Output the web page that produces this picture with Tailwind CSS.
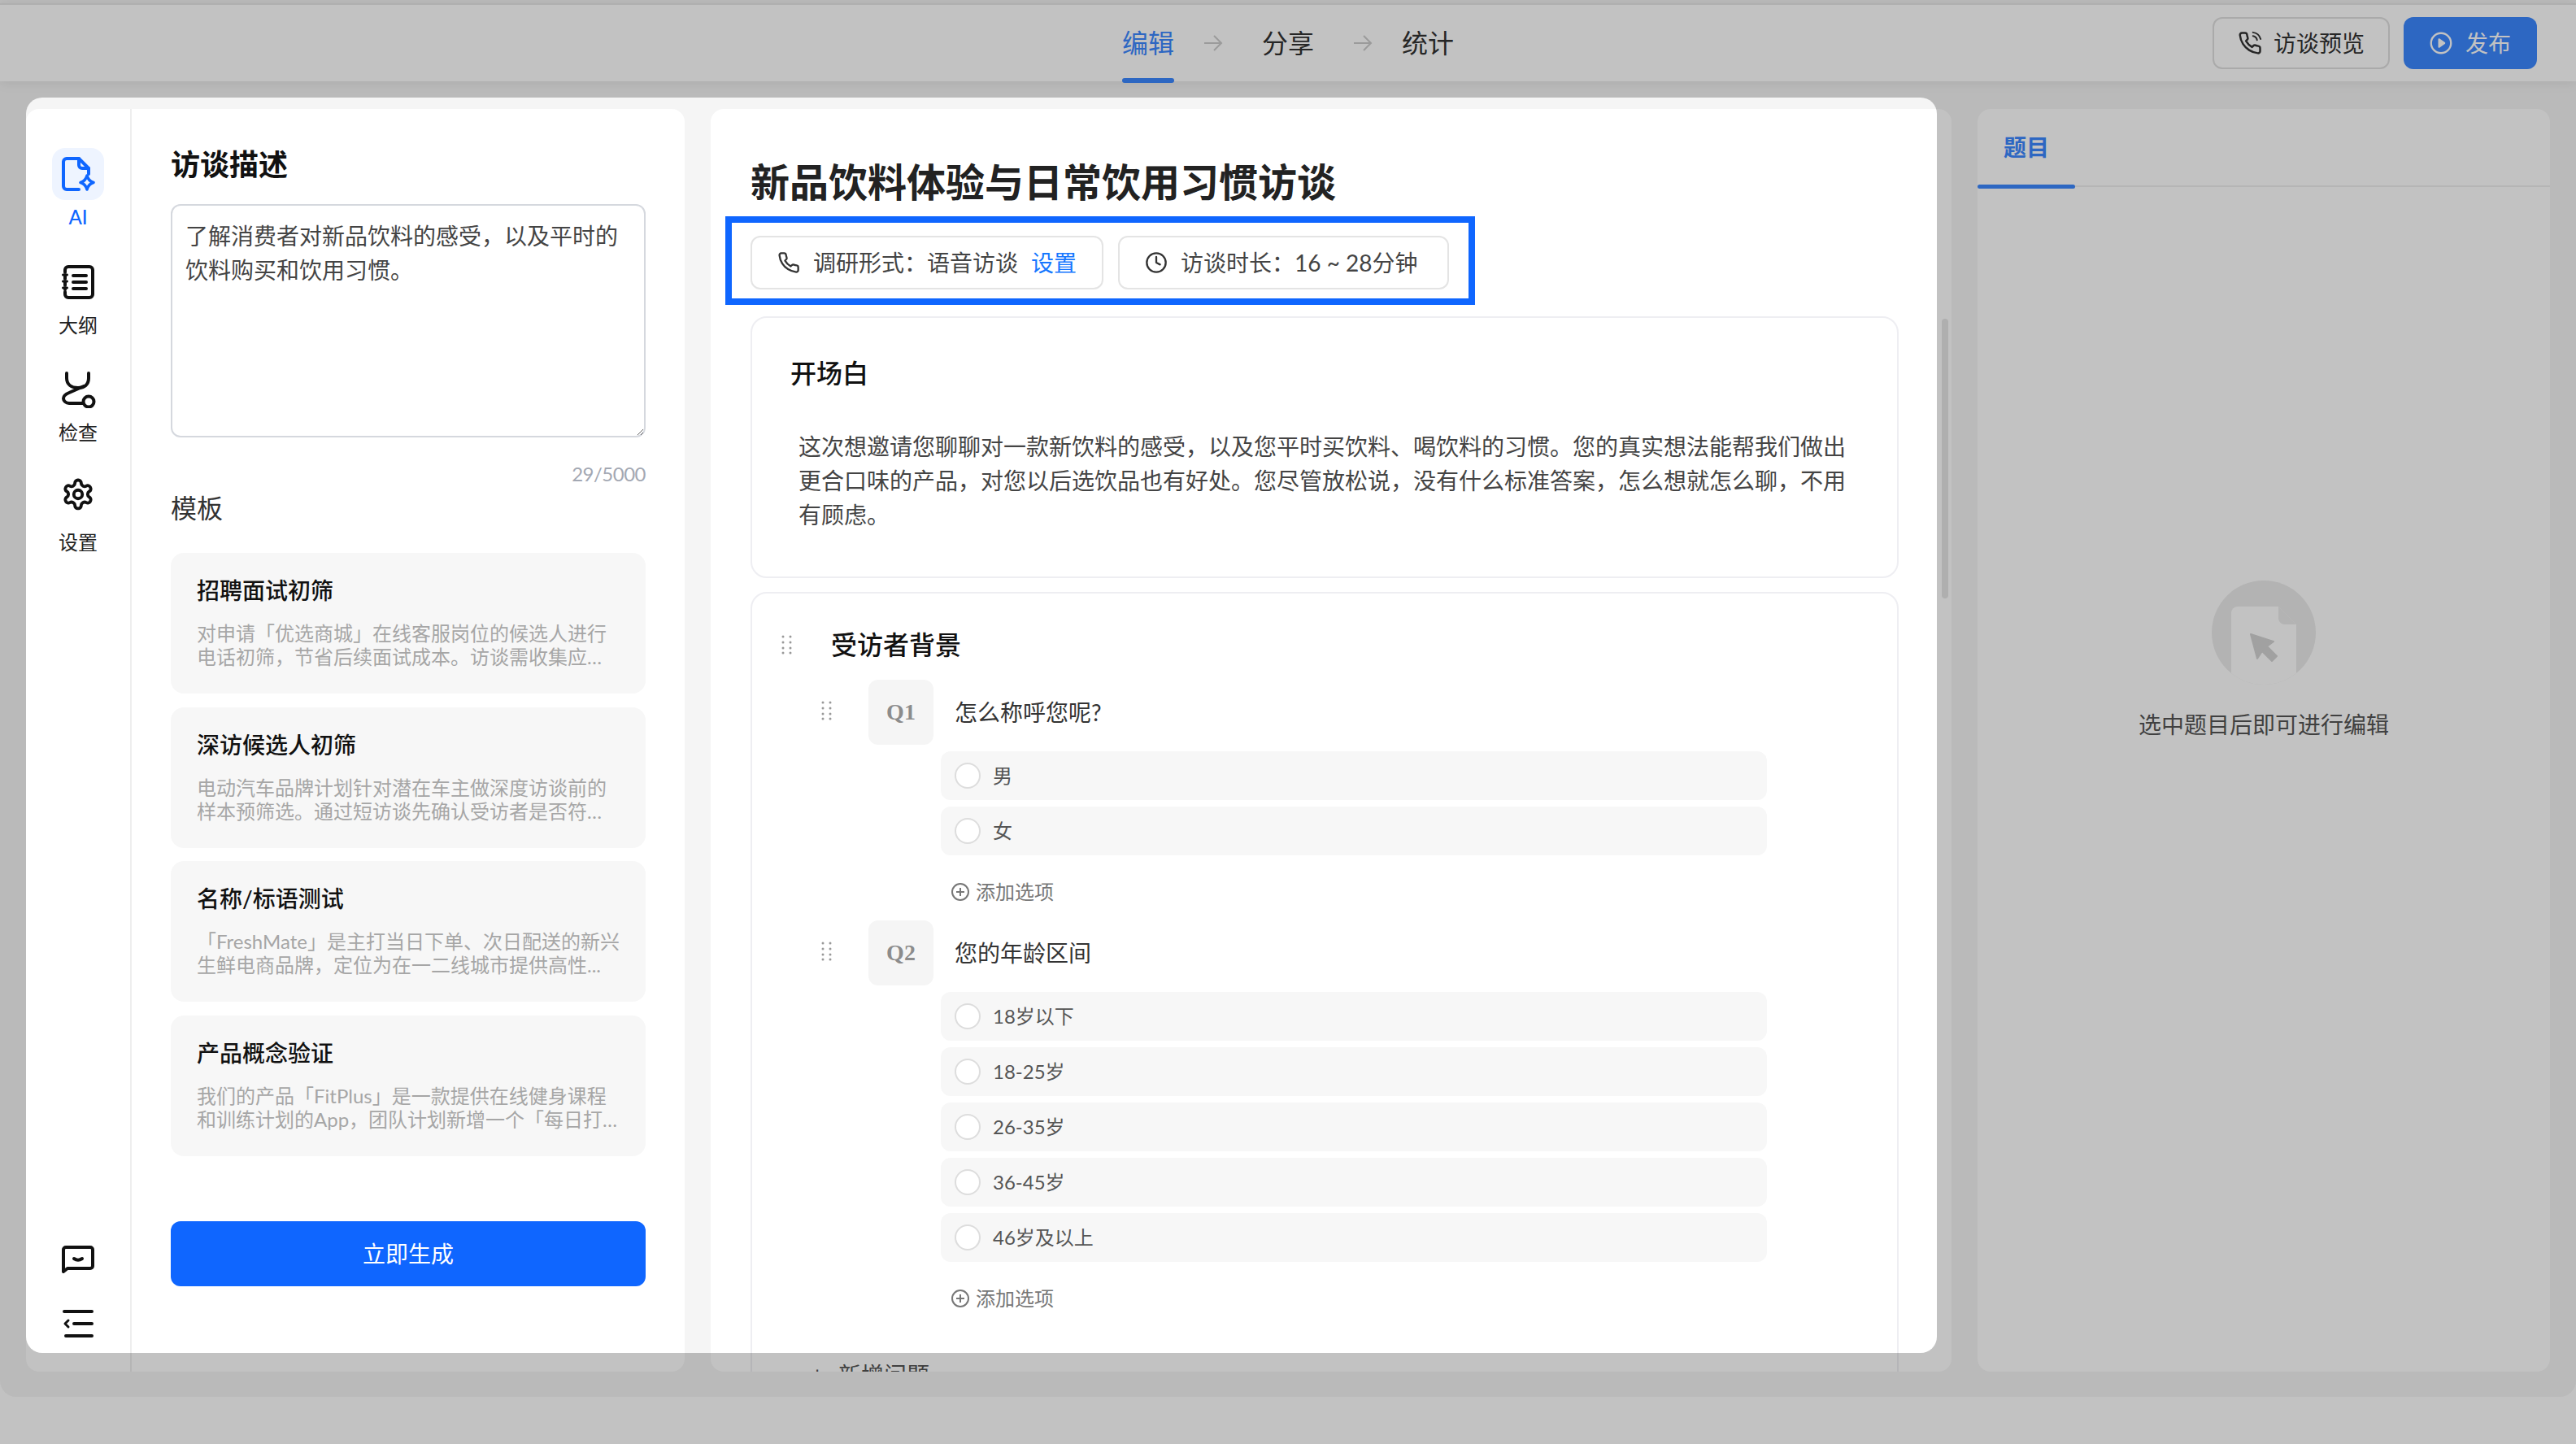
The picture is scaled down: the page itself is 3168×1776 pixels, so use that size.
<!DOCTYPE html>
<html lang="zh">
<head>
  <meta charset="UTF-8">
  <title>访谈编辑</title>
  <script src="https://cdn.jsdelivr.net/npm/@tailwindcss/browser@4"></script>
</head>
<body class="relative w-[3168px] h-[1776px] overflow-hidden bg-white text-[#333] [font-family:'Lato','Noto_Sans_CJK_SC',sans-serif]">
  <div class="h-[1718px] bg-[#f5f5f5] rounded-b-[20px] pt-[4px] overflow-hidden">

    <!-- Top bar -->
    <header class="relative h-[96px] bg-white border-t-2 border-[#e6e6e6] shadow-[0_2px_14px_rgba(0,0,0,0.08)] grid grid-cols-[1fr_auto_1fr] items-center">
      <div></div>
      <nav class="flex items-center h-full text-[32px] leading-[44px]">
        <div class="relative h-full flex items-center text-[#3c88ff]">
          编辑
          <span class="absolute left-0 right-0 bottom-[-2px] h-[6px] rounded-full bg-[#3c88ff]"></span>
        </div>
        <svg class="w-[24px] h-[24px] ml-[36px] mr-[48px] text-[#ccc]" viewBox="0 0 24 24" fill="none" stroke="currentColor" stroke-width="2"><path d="M1 12h21M13 3l9 9-9 9"/></svg>
        <div>分享</div>
        <svg class="w-[24px] h-[24px] ml-[48px] mr-[36px] text-[#ccc]" viewBox="0 0 24 24" fill="none" stroke="currentColor" stroke-width="2"><path d="M1 12h21M13 3l9 9-9 9"/></svg>
        <div>统计</div>
      </nav>
      <div class="flex justify-end gap-[17px] pr-[48px]">
        <button class="h-[64px] w-[218px] flex items-center justify-center gap-[14px] rounded-[12px] border-2 border-[#e0e0e0] bg-white text-[28px]">
          <svg class="w-[30px] h-[30px]" viewBox="0 0 24 24" fill="none" stroke="currentColor" stroke-width="2" stroke-linecap="round" stroke-linejoin="round"><path d="M22 16.900v3a2 2 0 0 1-2.200 2 19.800 19.800 0 0 1-8.600-3 19.500 19.500 0 0 1-6-6 19.800 19.800 0 0 1-3-8.700A2 2 0 0 1 4.100 2h3a2 2 0 0 1 2 1.700 12.800 12.800 0 0 0 .7 2.800 2 2 0 0 1-.4 2.100L8.100 9.900a16 16 0 0 0 6 6l1.300-1.300a2 2 0 0 1 2.100-.4 12.800 12.800 0 0 0 2.800.7 2 2 0 0 1 1.700 2z"/><path d="M15 5a5 5 0 0 1 4 4M15 1.500a9 9 0 0 1 7.500 6.500" stroke-width="1.600"/></svg>
          访谈预览
        </button>
        <button class="h-[64px] w-[164px] flex items-center justify-center gap-[16px] rounded-[12px] bg-[#3c88ff] text-white text-[28px]">
          <svg class="w-[28px] h-[28px]" viewBox="0 0 24 24" fill="none" stroke="currentColor" stroke-width="2"><circle cx="12" cy="12" r="10.500"/><path d="M10 8l5.500 4-5.500 4z" fill="currentColor" stroke-linejoin="round"/></svg>
          发布
        </button>
      </div>
    </header>

    <main class="flex gap-[32px] px-[32px] pt-[34px]">

      <!-- Left panel: rail and form -->
      <section class="flex w-[810px] h-[1553px] bg-white rounded-[16px] overflow-hidden">
        <aside class="w-[130px] h-full border-r-2 border-[#eeeeee] flex flex-col justify-between items-center pt-[48px] pb-[42px] text-[24px] leading-[32px] text-[#222]">
          <div class="flex flex-col items-center gap-[31.500px]">
            <div class="flex flex-col items-center gap-[5px] text-[#0f66ff]">
              <div class="w-[64px] h-[64px] rounded-[16px] bg-[#eef4ff] flex items-center justify-center">
                <svg class="w-[42px] h-[44px]" viewBox="0 0 42 44" fill="none" stroke="#0f66ff" stroke-width="4" stroke-linecap="round" stroke-linejoin="round"><path d="M22 41H7a4 4 0 0 1-4-4V7a4 4 0 0 1 4-4h15l12 12v7"/><path d="M22 3v8a4 4 0 0 0 4 4h8"/><path d="M32 24q2 7 8 8.500q-6 1.500-8 8.500q-2-7-8-8.500q6-1.500 8-8.500z" stroke-width="3.500"/></svg>
              </div>
              <span class="font-medium">AI</span>
            </div>
            <div class="flex flex-col items-center gap-[5px]">
              <div class="w-[64px] h-[64px] flex items-center justify-center">
                <svg class="w-[40px] h-[42px]" viewBox="0 0 40 42" fill="none" stroke="#111" stroke-width="4" stroke-linecap="round" stroke-linejoin="round"><path d="M4 9V6a4 4 0 0 1 4-4h26a4 4 0 0 1 4 4v30a4 4 0 0 1-4 4H8a4 4 0 0 1-4-4v-3"/><path d="M4 13v4M4 21v4M4 29v1"/><path d="M1.500 12h5M1.500 20h5M1.500 28h5" stroke-width="3"/><path d="M14 13h16M14 21h16M14 29h16"/></svg>
              </div>
              <span>大纲</span>
            </div>
            <div class="flex flex-col items-center gap-[5px]">
              <div class="w-[64px] h-[64px] flex items-center justify-center">
                <svg class="w-[44px] h-[46px]" viewBox="0 0 44 46" fill="none" stroke="#111" stroke-width="4" stroke-linecap="round" stroke-linejoin="round"><path d="M8 3v6c0 8 6 12 14 12s13-4 13-12V3" /><path d="M29 19L11 27c-5 2-7 4-7 7s3 6 7 6h17"/><circle cx="35" cy="38" r="6.500"/></svg>
              </div>
              <span>检查</span>
            </div>
            <div class="flex flex-col items-center gap-[7px]">
              <div class="w-[64px] h-[64px] flex items-center justify-center">
                <svg class="w-[42px] h-[42px] mb-[8px]" viewBox="0 0 24 24" fill="none" stroke="#111" stroke-width="2.200" stroke-linecap="round" stroke-linejoin="round"><path d="M12.200 2h-.4a2 2 0 0 0-2 2v.2a2 2 0 0 1-1 1.700l-.4.300a2 2 0 0 1-2 0l-.2-.1a2 2 0 0 0-2.700.7l-.2.400a2 2 0 0 0 .7 2.700l.2.100a2 2 0 0 1 1 1.700v.5a2 2 0 0 1-1 1.700l-.2.100a2 2 0 0 0-.7 2.700l.2.400a2 2 0 0 0 2.700.7l.2-.1a2 2 0 0 1 2 0l.4.300a2 2 0 0 1 1 1.700v.2a2 2 0 0 0 2 2h.4a2 2 0 0 0 2-2v-.2a2 2 0 0 1 1-1.700l.4-.3a2 2 0 0 1 2 0l.2.100a2 2 0 0 0 2.700-.7l.2-.4a2 2 0 0 0-.7-2.700l-.2-.1a2 2 0 0 1-1-1.700v-.5a2 2 0 0 1 1-1.700l.2-.1a2 2 0 0 0 .7-2.700l-.2-.4a2 2 0 0 0-2.700-.7l-.2.100a2 2 0 0 1-2 0l-.4-.3a2 2 0 0 1-1-1.700V4a2 2 0 0 0-2-2z"/><circle cx="12" cy="12" r="3"/></svg>
              </div>
              <span>设置</span>
            </div>
          </div>
          <div class="flex flex-col items-center gap-[44px]">
            <svg class="w-[42px] h-[36px]" viewBox="0 0 42 36" fill="none" stroke="#111" stroke-width="4" stroke-linecap="round" stroke-linejoin="round"><path d="M3 33V6a3 3 0 0 1 3-3h30a3 3 0 0 1 3 3v20a3 3 0 0 1-3 3H8z"/><path d="M16 17q5 3.500 10 0" /></svg>
            <svg class="w-[38px] h-[34px]" viewBox="0 0 38 34" fill="none" stroke="#111" stroke-width="4" stroke-linecap="round" stroke-linejoin="round"><path d="M2 2h34M14 17h22M4 32h32"/><path d="M7 13l-4 4 4 4" stroke-width="3"/></svg>
          </div>
        </aside>

        <div class="flex-1 px-[48px] pt-[48px] flex flex-col">
          <h2 class="text-[36px] leading-[40px] font-bold text-[#111]">访谈描述</h2>
          <textarea class="mt-[29px] w-[584px] h-[287px] shrink-0 border-2 border-[#d5d8de] rounded-[12px] px-[16px] py-[16px] text-[28px] leading-[42px] text-[#444] outline-none resize-y">了解消费者对新品饮料的感受，以及平时的饮料购买和饮用习惯。</textarea>
          <div class="mt-[29px] text-right text-[24px] leading-[32px] tracking-[-0.5px] text-[#a3a8b3]">29/5000</div>
          <h3 class="mt-[4px] text-[32px] leading-[44px] text-[#333]">模板</h3>
          <div class="mt-[33px] flex flex-col gap-[16.500px]">
            <div class="h-[173px] rounded-[16px] bg-[#f7f7f7] px-[32px] pt-[26px]">
              <div class="text-[28px] leading-[40px] font-medium text-[#111]">招聘面试初筛</div>
              <p class="mt-[18px] text-[24px] leading-[29px] text-[#a6a6a6] line-clamp-2">对申请「优选商城」在线客服岗位的候选人进行电话初筛，节省后续面试成本。访谈需收集应聘者的相关信息</p>
            </div>
            <div class="h-[173px] rounded-[16px] bg-[#f7f7f7] px-[32px] pt-[26px]">
              <div class="text-[28px] leading-[40px] font-medium text-[#111]">深访候选人初筛</div>
              <p class="mt-[18px] text-[24px] leading-[29px] text-[#a6a6a6] line-clamp-2">电动汽车品牌计划针对潜在车主做深度访谈前的样本预筛选。通过短访谈先确认受访者是否符合条件与意愿</p>
            </div>
            <div class="h-[173px] rounded-[16px] bg-[#f7f7f7] pl-[32px] pr-[28px] pt-[26px]">
              <div class="text-[28px] leading-[40px] font-medium text-[#111]">名称/标语测试</div>
              <p class="mt-[18px] text-[24px] leading-[29px] text-[#a6a6a6]">「FreshMate」是主打当日下单、次日配送的新兴生鲜电商品牌，定位为在一二线城市提供高性...</p>
            </div>
            <div class="h-[173px] rounded-[16px] bg-[#f7f7f7] px-[32px] pt-[26px]">
              <div class="text-[28px] leading-[40px] font-medium text-[#111]">产品概念验证</div>
              <p class="mt-[18px] text-[24px] leading-[29px] text-[#a6a6a6] line-clamp-2">我们的产品「FitPlus」是一款提供在线健身课程和训练计划的App，团队计划新增一个「每日打卡挑战」功能</p>
            </div>
          </div>
          <button class="mt-[80px] h-[80px] w-full shrink-0 rounded-[12px] bg-[#0f66ff] text-white text-[28px]">立即生成</button>
        </div>
      </section>

      <!-- Middle panel: outline -->
      <section class="relative w-[1526px] h-[1553px] bg-white rounded-[16px] overflow-hidden pl-[49px] pt-[60px]">
        <h1 class="text-[48px] leading-[60px] font-bold text-[#222]">新品饮料体验与日常饮用习惯访谈</h1>

        <div class="relative mt-[36px] flex gap-[18px] w-fit text-[28px] leading-[40px] text-[#444]">
          <div class="h-[66px] flex items-center rounded-[12px] border-2 border-[#e4e4e4] pl-[31px] pr-[31px]">
            <svg class="w-[28px] h-[28px] mr-[16px]" viewBox="0 0 24 24" fill="none" stroke="#333" stroke-width="2" stroke-linecap="round" stroke-linejoin="round"><path d="M22 16.900v3a2 2 0 0 1-2.200 2 19.800 19.800 0 0 1-8.600-3 19.500 19.500 0 0 1-6-6 19.800 19.800 0 0 1-3-8.700A2 2 0 0 1 4.100 2h3a2 2 0 0 1 2 1.700 12.800 12.800 0 0 0 .7 2.800 2 2 0 0 1-.4 2.100L8.100 9.900a16 16 0 0 0 6 6l1.300-1.300a2 2 0 0 1 2.100-.4 12.800 12.800 0 0 0 2.800.7 2 2 0 0 1 1.700 2z"/></svg>
            <span>调研形式：语音访谈</span>
            <span class="ml-[16px] text-[#1677ff]">设置</span>
          </div>
          <div class="w-[407px] h-[66px] flex items-center rounded-[12px] border-2 border-[#e4e4e4] pl-[31px]">
            <svg class="w-[28px] h-[28px] mr-[16px]" viewBox="0 0 24 24" fill="none" stroke="#333" stroke-width="2" stroke-linecap="round" stroke-linejoin="round"><circle cx="12" cy="12" r="10"/><path d="M12 6v6l4 2"/></svg>
            <span class="whitespace-nowrap">访谈时长：16 ~ 28分钟</span>
          </div>
          <!-- highlight frame around the chips -->
          <div class="absolute -left-[31px] -right-[32px] -top-[24px] -bottom-[19px] border-[8px] border-[#0f66ff]"></div>
        </div>

        <!-- Opening card -->
        <div class="mt-[33px] w-[1412px] h-[322px] rounded-[20px] border-2 border-[#eeeef2] pt-[44px] pl-[47px]">
          <h3 class="text-[32px] leading-[48px] font-medium text-[#111]">开场白</h3>
          <p class="mt-[45px] ml-[10px] w-[1300px] text-[28px] leading-[42px] text-[#444]">这次想邀请您聊聊对一款新饮料的感受，以及您平时买饮料、喝饮料的习惯。您的真实想法能帮我们做出更合口味的产品，对您以后选饮品也有好处。您尽管放松说，没有什么标准答案，怎么想就怎么聊，不用有顾虑。</p>
        </div>

        <!-- Section card -->
        <div class="mt-[17px] w-[1412px] h-[1100px] rounded-[20px] border-2 border-[#eeeef2] pt-[39px]">
          <div class="flex items-center pl-[36px] h-[48px]">
            <svg class="w-[14px] h-[24px] text-[#999]" viewBox="0 0 14 24" fill="currentColor"><circle cx="2" cy="2" r="1.500"/><circle cx="11" cy="2" r="1.500"/><circle cx="2" cy="9" r="1.500"/><circle cx="11" cy="9" r="1.500"/><circle cx="2" cy="16" r="1.500"/><circle cx="11" cy="16" r="1.500"/><circle cx="2" cy="22" r="1.500"/><circle cx="11" cy="22" r="1.500"/></svg>
            <h3 class="ml-[47px] text-[32px] leading-[48px] font-medium text-[#111]">受访者背景</h3>
          </div>

          <!-- Q1 -->
          <div class="mt-[19px] flex pl-[85px]">
            <svg class="mt-[26px] w-[14px] h-[24px] text-[#999]" viewBox="0 0 14 24" fill="currentColor"><circle cx="2" cy="2" r="1.500"/><circle cx="11" cy="2" r="1.500"/><circle cx="2" cy="9" r="1.500"/><circle cx="11" cy="9" r="1.500"/><circle cx="2" cy="16" r="1.500"/><circle cx="11" cy="16" r="1.500"/><circle cx="2" cy="22" r="1.500"/><circle cx="11" cy="22" r="1.500"/></svg>
            <div class="ml-[44px] w-[80px] h-[80px] rounded-[12px] bg-[#f5f5f5] flex items-center justify-center text-[28px] font-semibold text-[#8c8c8c] [font-family:'Liberation_Serif',serif]">Q1</div>
            <div class="ml-[26px] h-[80px] flex items-center text-[28px] text-[#333]">怎么称呼您呢?</div>
          </div>
          <div class="mt-[8px] ml-[232px] w-[1016px] flex flex-col gap-[8px] text-[24px] text-[#555]">
            <div class="h-[60px] rounded-[12px] bg-[#f7f7f7] flex items-center pl-[17px] gap-[15px]"><span class="w-[32px] h-[32px] rounded-full border-2 border-[#dddddd] bg-white"></span>男</div>
            <div class="h-[60px] rounded-[12px] bg-[#f7f7f7] flex items-center pl-[17px] gap-[15px]"><span class="w-[32px] h-[32px] rounded-full border-2 border-[#dddddd] bg-white"></span>女</div>
          </div>
          <div class="mt-[29px] ml-[244px] h-[32px] flex items-center gap-[7px] text-[24px] text-[#777]">
            <svg class="w-[24px] h-[24px]" viewBox="0 0 24 24" fill="none" stroke="#777" stroke-width="2"><circle cx="12" cy="12" r="10"/><path d="M12 7v10M7 12h10"/></svg>
            添加选项
          </div>

          <!-- Q2 -->
          <div class="mt-[19px] flex pl-[85px]">
            <svg class="mt-[26px] w-[14px] h-[24px] text-[#999]" viewBox="0 0 14 24" fill="currentColor"><circle cx="2" cy="2" r="1.500"/><circle cx="11" cy="2" r="1.500"/><circle cx="2" cy="9" r="1.500"/><circle cx="11" cy="9" r="1.500"/><circle cx="2" cy="16" r="1.500"/><circle cx="11" cy="16" r="1.500"/><circle cx="2" cy="22" r="1.500"/><circle cx="11" cy="22" r="1.500"/></svg>
            <div class="ml-[44px] w-[80px] h-[80px] rounded-[12px] bg-[#f5f5f5] flex items-center justify-center text-[28px] font-semibold text-[#8c8c8c] [font-family:'Liberation_Serif',serif]">Q2</div>
            <div class="ml-[26px] h-[80px] flex items-center text-[28px] text-[#333]">您的年龄区间</div>
          </div>
          <div class="mt-[8px] ml-[232px] w-[1016px] flex flex-col gap-[8px] text-[24px] text-[#555]">
            <div class="h-[60px] rounded-[12px] bg-[#f7f7f7] flex items-center pl-[17px] gap-[15px]"><span class="w-[32px] h-[32px] rounded-full border-2 border-[#dddddd] bg-white"></span>18岁以下</div>
            <div class="h-[60px] rounded-[12px] bg-[#f7f7f7] flex items-center pl-[17px] gap-[15px]"><span class="w-[32px] h-[32px] rounded-full border-2 border-[#dddddd] bg-white"></span>18-25岁</div>
            <div class="h-[60px] rounded-[12px] bg-[#f7f7f7] flex items-center pl-[17px] gap-[15px]"><span class="w-[32px] h-[32px] rounded-full border-2 border-[#dddddd] bg-white"></span>26-35岁</div>
            <div class="h-[60px] rounded-[12px] bg-[#f7f7f7] flex items-center pl-[17px] gap-[15px]"><span class="w-[32px] h-[32px] rounded-full border-2 border-[#dddddd] bg-white"></span>36-45岁</div>
            <div class="h-[60px] rounded-[12px] bg-[#f7f7f7] flex items-center pl-[17px] gap-[15px]"><span class="w-[32px] h-[32px] rounded-full border-2 border-[#dddddd] bg-white"></span>46岁及以上</div>
          </div>
          <div class="mt-[29px] ml-[244px] h-[32px] flex items-center gap-[7px] text-[24px] text-[#777]">
            <svg class="w-[24px] h-[24px]" viewBox="0 0 24 24" fill="none" stroke="#777" stroke-width="2"><circle cx="12" cy="12" r="10"/><path d="M12 7v10M7 12h10"/></svg>
            添加选项
          </div>

          <div class="mt-[58px] ml-[72px] flex items-center gap-[20px] text-[28px] leading-[40px] text-[#555]">
            <span class="w-[14px] text-center">+</span>
            新增问题
          </div>
        </div>

        <!-- Scrollbar -->
        <div class="absolute left-[1514px] top-[258px] w-[8px] h-[344px] rounded-full bg-[#e6e6e6]"></div>
      </section>

      <!-- Right panel -->
      <section class="w-[704px] h-[1553px] bg-white rounded-[16px] overflow-hidden">
        <div class="h-[96px] border-b-2 border-[#eeeeee]">
          <div class="relative w-[120px] h-[96px] pt-[27px] text-center text-[28px] leading-[40px] font-semibold text-[#3c88ff]">
            题目
            <span class="absolute left-0 right-0 bottom-[-2px] h-[5px] rounded-full bg-[#3c88ff]"></span>
          </div>
        </div>
        <div class="flex flex-col items-center pt-[484px]">
          <svg class="w-[128px] h-[128px]" viewBox="0 0 128 128">
            <defs><clipPath id="disc"><circle cx="64" cy="64" r="64"/></clipPath></defs>
            <circle cx="64" cy="64" r="64" fill="#ebebeb"/>
            <g clip-path="url(#disc)">
              <path d="M24 40a8 8 0 0 1 8-8h50l22 22v80H24z" fill="#ffffff"/>
              <path d="M82 32l22 22H90a8 8 0 0 1-8-8z" fill="#ebebeb"/>
            </g>
            <path d="M48 66l28 9-8 6 12 12-6 6-12-12-6 9z" fill="#d4d4d4" stroke="#d4d4d4" stroke-width="2" stroke-linejoin="round"/>
          </svg>
          <p class="mt-[29px] text-[28px] leading-[40px] text-[#555]">选中题目后即可进行编辑</p>
        </div>
      </section>
    </main>
  </div>

  <!-- Guide mask with a hole over the left and middle panels -->
  <div class="absolute left-[32px] top-[120px] w-[2350px] h-[1544px] rounded-[20px] shadow-[0_0_0_4000px_rgba(0,0,0,0.24)] pointer-events-none"></div>
</body>
</html>
